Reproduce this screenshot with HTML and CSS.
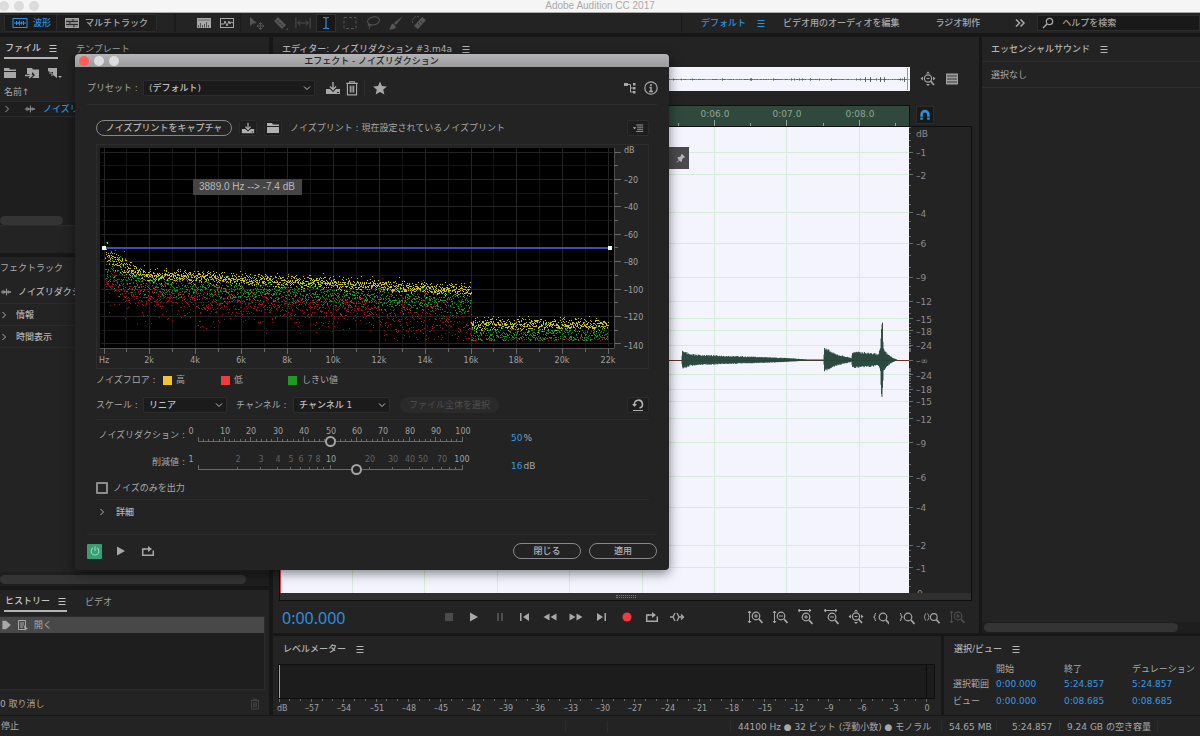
FILE: index.html
```html
<!DOCTYPE html>
<html lang="ja">
<head>
<meta charset="utf-8">
<title>Adobe Audition CC 2017</title>
<link rel="stylesheet" href="styles.css">
</head>
<body>
<svg class="sprite" aria-hidden="true">
  <symbol id="i-wave" viewBox="0 0 16 12"><rect x="1" y="1.500" width="14" height="9" fill="none" stroke="currentColor"/><path d="M2 6h12M4.500 4v4M6 5v2M7.500 3.500v5M9.500 4.500v3M11.500 4v4" stroke="currentColor" fill="none"/></symbol>
  <symbol id="i-multi" viewBox="0 0 16 12"><rect x="1.500" y="1.500" width="13" height="9" fill="#8a8a8a" stroke="currentColor"/><path d="M2 4.500h12M2 7.500h12M9 2v2.500M6 4.500v3M10 7.500v3" stroke="#2a2a2a"/></symbol>
  <symbol id="i-spec" viewBox="0 0 16 12"><rect x="1" y="1" width="14" height="10" fill="currentColor"/><path d="M2 3h12" stroke="#666"/><path d="M2.500 10.500V8M4.500 10.500V6M6.500 10.500V8M8.500 10.500V7M10.500 10.500V5M12.500 10.500V8" stroke="#555"/></symbol>
  <symbol id="i-pitch" viewBox="0 0 16 12"><rect x="1.500" y="1.500" width="13" height="9" fill="none" stroke="currentColor"/><path d="M2 7h3l1-3 2 5 2-5 1 3 1-2 2 1" fill="none" stroke="currentColor"/></symbol>
  <symbol id="i-move" viewBox="0 0 16 16"><path d="M1 2v9l3-2.500 4-.5z" fill="currentColor"/><path d="M8 11h7M11.500 7.500v7M9.500 9.500L8 11l1.500 1.500M13.500 9.500L15 11l-1.500 1.500M10 9l1.500-1.500L13 9M10 13l1.500 1.500L13 13" stroke="currentColor" fill="none"/></symbol>
  <symbol id="i-razor" viewBox="0 0 16 16"><path d="M6 2l8 8-4 4-8-8z" fill="currentColor"/><path d="M5 5.500l6 6" stroke="#232323" stroke-dasharray="2 1"/><path d="M14 15h2v-2z" fill="currentColor"/></symbol>
  <symbol id="i-slip" viewBox="0 0 18 16"><path d="M1 2v12M17 2v12M3 8h12M6 5L3 8l3 3M12 5l3 3-3 3" fill="none" stroke="currentColor"/></symbol>
  <symbol id="i-ibeam" viewBox="0 0 16 16"><path d="M5 2.500h2l1 1 1-1h2M5 13.500h2l1-1 1 1h2M8 3v10" fill="none" stroke="currentColor" stroke-width="1.200"/></symbol>
  <symbol id="i-marquee" viewBox="0 0 16 16"><rect x="2" y="2.500" width="12" height="11" fill="none" stroke="currentColor" stroke-dasharray="3 2"/></symbol>
  <symbol id="i-lasso" viewBox="0 0 16 16"><ellipse cx="8.500" cy="6" rx="6" ry="4" fill="none" stroke="currentColor" transform="rotate(-12 8 6)"/><path d="M4 9c-2 1 0 3 1 2s-1-2-1-1 2 2 0 4" fill="none" stroke="currentColor"/></symbol>
  <symbol id="i-brush" viewBox="0 0 16 16"><path d="M15 1L8 10 6 8z" fill="currentColor"/><path d="M5 8.500l3 3c-1 3-4 3-7 3 2-1 1-5 4-6z" fill="currentColor"/></symbol>
  <symbol id="i-heal" viewBox="0 0 16 16"><path d="M11 2l4 3-8 9-4-3z" fill="currentColor"/><path d="M7 8l3 3M9 6l3 3" stroke="#232323" stroke-dasharray="1 1"/><path d="M8 2C4 0 0 4 2 9" fill="none" stroke="currentColor" stroke-dasharray="2 1"/></symbol>
  <symbol id="i-menu" viewBox="0 0 8 8"><path d="M.5 1.500h7M.5 4.500h7M.5 7.500h7" stroke="currentColor"/></symbol>
  <symbol id="i-more" viewBox="0 0 12 10"><path d="M2 1.500L5.500 5 2 8.500M6.500 1.500L10 5 6.500 8.500" fill="none" stroke="currentColor" stroke-width="1.500"/></symbol>
  <symbol id="i-search" viewBox="0 0 12 12"><circle cx="7.500" cy="4.500" r="3.200" fill="none" stroke="currentColor" stroke-width="1.200"/><path d="M5 7L1 11" stroke="currentColor" stroke-width="1.500"/></symbol>
  <symbol id="i-folder" viewBox="0 0 14 12"><path d="M1 1h5l1 1.500h6V4H1z" fill="currentColor"/><path d="M1 5h12v6H1z" fill="currentColor"/></symbol>
  <symbol id="i-import" viewBox="0 0 16 12"><path d="M3 1h5l1 1.500h6V11H8l3-3-3-3v2H3z" fill="currentColor"/><path d="M1 8.500h6M5 6l3 2.500L5 11" fill="none" stroke="currentColor" stroke-width="1.500"/></symbol>
  <symbol id="i-new" viewBox="0 0 16 12"><path d="M2 1h9v10L7 8V5H4L2 4z" fill="currentColor"/><path d="M3 6h3v3" fill="none" stroke="currentColor"/><path d="M12 9h4l-2 2z" fill="currentColor"/></symbol>
  <symbol id="i-clip" viewBox="0 0 14 10"><path d="M1 5h12M3.500 2.500v5M5.500 3.500v3M7.500 1v8M9.500 3v4M11.500 4v2" stroke="currentColor"/></symbol>
  <symbol id="i-chev" viewBox="0 0 8 8"><path d="M2.500 1l3 3-3 3" fill="none" stroke="currentColor"/></symbol>
  <symbol id="i-down" viewBox="0 0 8 8"><path d="M1 2.500l3 3 3-3" fill="none" stroke="currentColor"/></symbol>
  <symbol id="i-save" viewBox="0 0 16 14"><path d="M1 8h4l3 3 3-3h4v5H1z" fill="currentColor"/><path d="M8 1v7M5 5.500l3 3 3-3" fill="none" stroke="currentColor" stroke-width="1.400"/><path d="M12 11.500h2" stroke="#222"/></symbol>
  <symbol id="i-trash" viewBox="0 0 12 14"><path d="M1 3h10M4 3V1.500h4V3M2 3v10h8V3M4.500 5v6M6 5v6M7.500 5v6" fill="none" stroke="currentColor"/></symbol>
  <symbol id="i-star" viewBox="0 0 14 14"><path d="M7 .5l2 4.500 4.900.5-3.700 3.200 1.200 4.800L7 11l-4.400 2.500 1.200-4.800L.1 5.500 5 5z" fill="currentColor"/></symbol>
  <symbol id="i-route" viewBox="0 0 12 12"><path d="M0 1h4v3H0zM9 1h2.500v2.500H9zM9 5h2.500v2.500H9zM9 9h2.500v2.500H9z" fill="currentColor"/><path d="M4 2.500h2.500V10H9M6.500 6H9" fill="none" stroke="currentColor"/></symbol>
  <symbol id="i-info" viewBox="0 0 14 14"><circle cx="7" cy="7" r="6.200" fill="none" stroke="currentColor" stroke-width="1.200"/><path d="M7 3v2M5.500 6.500H7v4M5 10.500h4" fill="none" stroke="currentColor" stroke-width="1.500"/></symbol>
  <symbol id="i-pmenu" viewBox="0 0 14 10"><path d="M1 4h4L3 6.500z" fill="currentColor"/><path d="M5 1.500h8M6 4h7M6 6.500h7M5 9h8" stroke="currentColor"/></symbol>
  <symbol id="i-reset" viewBox="0 0 14 14"><path d="M3.500 6.500a4 4 0 1 1 5 3.500" fill="none" stroke="currentColor" stroke-width="1.600"/><path d="M1 6h5L3.500 9z" fill="currentColor"/><path d="M2 12.500h10" stroke="currentColor"/></symbol>
  <symbol id="i-power" viewBox="0 0 14 14"><path d="M4.500 3.500a4.500 4.500 0 1 0 5 0M7 1.500V7" fill="none" stroke="currentColor" stroke-width="1.200"/></symbol>
  <symbol id="i-stop" viewBox="0 0 16 12"><path d="M4 2h8v8H4z" fill="currentColor"/></symbol>
  <symbol id="i-play" viewBox="0 0 16 12"><path d="M4 1.500v9l8-4.500z" fill="currentColor"/></symbol>
  <symbol id="i-pause" viewBox="0 0 16 12"><path d="M5 2h2v8H5zM9 2h2v8H9z" fill="currentColor"/></symbol>
  <symbol id="i-prev" viewBox="0 0 16 12"><path d="M3 2h1.500v8H3zM12 2v8L6 6z" fill="currentColor"/></symbol>
  <symbol id="i-rew" viewBox="0 0 16 12"><path d="M7.500 2.500v7L1.500 6zM14.500 2.500v7L8.500 6z" fill="currentColor"/></symbol>
  <symbol id="i-fwd" viewBox="0 0 16 12"><path d="M1.500 2.500v7L7.500 6zM8.500 2.500v7L14.500 6z" fill="currentColor"/></symbol>
  <symbol id="i-next" viewBox="0 0 16 12"><path d="M11.500 2H13v8h-1.500zM4 2v8l6-4z" fill="currentColor"/></symbol>
  <symbol id="i-rec" viewBox="0 0 16 12"><circle cx="8" cy="6" r="4.500" fill="#f03a40"/></symbol>
  <symbol id="i-loop" viewBox="0 0 16 12"><path d="M5 4H2.700v6.300h10.600V5.500" fill="none" stroke="currentColor" stroke-width="1.500"/><path d="M4 3.200h4V1l4 3-4 3V4.800H4z" fill="currentColor"/></symbol>
  <symbol id="i-skip" viewBox="0 0 16 12"><path d="M1 6h3M6 2L4 6l2 4M8 2l2 4-2 4M10 6h4M12 3.500L14.500 6 12 8.500" fill="none" stroke="currentColor" stroke-width="1.300"/></symbol>
  <symbol id="i-lens" viewBox="0 0 16 16"><circle cx="9" cy="7" r="3.800" fill="none" stroke="currentColor" stroke-width="1.200"/><path d="M12 10l3.500 4" stroke="currentColor" stroke-width="1.800"/></symbol>
  <symbol id="i-zin" viewBox="0 0 16 16"><use href="#i-lens"/><path d="M7 7h4M9 5v4" stroke="currentColor"/><path d="M2.500 2v12M1 4l1.500-2L4 4M1 12l1.500 2L4 12" fill="none" stroke="currentColor"/></symbol>
  <symbol id="i-zout" viewBox="0 0 16 16"><use href="#i-lens"/><path d="M7 7h4" stroke="currentColor"/><path d="M2.500 2v12M1 4l1.500-2L4 4M1 12l1.500 2L4 12" fill="none" stroke="currentColor"/></symbol>
  <symbol id="i-tin" viewBox="0 0 16 16"><use href="#i-lens" y="1"/><path d="M7 8h4M9 6v4" stroke="currentColor"/><path d="M1 1.500h13M3 0L1 1.500 3 3M12 0l2 1.500L12 3" fill="none" stroke="currentColor"/></symbol>
  <symbol id="i-tout" viewBox="0 0 16 16"><use href="#i-lens" y="1"/><path d="M7 8h4" stroke="currentColor"/><path d="M1 1.500h13M3 0L1 1.500 3 3M12 0l2 1.500L12 3" fill="none" stroke="currentColor"/></symbol>
  <symbol id="i-full" viewBox="0 0 16 16"><circle cx="8" cy="7.500" r="3.600" fill="none" stroke="currentColor" stroke-width="1.200"/><path d="M10.500 10l3.500 4" stroke="currentColor" stroke-width="1.800"/><path d="M6.500 7.500h3" stroke="currentColor"/><path d="M6 2.500L8 .5l2 2zM6 13l2 2 2-2zM3 5.500l-2.500 2 2.500 2zM13 5.500l2.500 2-2.500 2z" fill="currentColor"/></symbol>
  <symbol id="i-zl" viewBox="0 0 16 16"><use href="#i-lens" x="1" y="1"/><path d="M3 4L2 5v2L.5 8 2 9v2l1 1" fill="none" stroke="currentColor"/></symbol>
  <symbol id="i-zr" viewBox="0 0 16 16"><use href="#i-lens" x="0" y="1"/><path d="M1 4l1 1v2l1.500 1L2 9v2l-1 1" fill="none" stroke="currentColor"/></symbol>
  <symbol id="i-zs" viewBox="0 0 18 16"><use href="#i-lens" x="2" y="1" width="16" height="16"/><path d="M2 4L1 6v1L0 8l1 1v1l1 2M4 4l1 2v1l1 1-1 1v1l-1 2" fill="none" stroke="currentColor"/></symbol>
  <symbol id="i-list" viewBox="0 0 14 12"><path d="M1 .5h12v11H1z" fill="currentColor"/><path d="M2 3h10M2 6h10M2 9h10" stroke="#333"/></symbol>
  <symbol id="i-magnet" viewBox="0 0 14 14"><path d="M3 9V6.500a4 4 0 0 1 8 0V9" fill="none" stroke="currentColor" stroke-width="3"/><path d="M1.500 10h3v2.500h-3zM9.500 10h3v2.500h-3z" fill="currentColor"/></symbol>
  <symbol id="i-pin" viewBox="0 0 12 12"><path d="M7 2l3 3-1 1H8L7 8v1.500l-1 .5-1.500-1.500L2 10.500l-.5-.5L4 8 2.500 6.500 3 5h1.500L6 4V2.500z" fill="currentColor"/></symbol>
  <symbol id="i-doc" viewBox="0 0 12 12"><path d="M1.500 1.500h7v9h-7z" fill="none" stroke="currentColor"/><path d="M3 4h4M3 6h4M3 8h3" stroke="currentColor"/><path d="M7 6l4 4-2 .2L8 12z" fill="currentColor"/></symbol>
  <symbol id="i-head" viewBox="0 0 10 10"><path d="M2 1.500h3L9 5 5 8.500H2z" fill="currentColor"/></symbol>
</svg>

<div class="app">
  <header class="titlebar"><i class="light"></i><i class="light"></i><i class="light"></i><h1>Adobe Audition CC 2017</h1></header>

  <nav class="toolbar">
    <div class="modes">
      <button class="mode active"><svg class="ic wide"><use href="#i-wave"/></svg>波形</button>
      <button class="mode"><svg class="ic wide"><use href="#i-multi"/></svg>マルチトラック</button>
    </div>
    <div class="tools views">
      <button class="tool" aria-label="スペクトル"><svg class="ic"><use href="#i-spec"/></svg></button>
      <button class="tool" aria-label="ピッチ"><svg class="ic"><use href="#i-pitch"/></svg></button>
    </div>
    <div class="tools dimmed">
      <button class="tool" aria-label="移動"><svg class="ic"><use href="#i-move"/></svg></button>
      <button class="tool" aria-label="カット"><svg class="ic"><use href="#i-razor"/></svg></button>
      <button class="tool" aria-label="スリップ"><svg class="ic"><use href="#i-slip"/></svg></button>
      <button class="tool on" aria-label="時間選択"><svg class="ic"><use href="#i-ibeam"/></svg></button>
      <button class="tool" aria-label="長方形選択"><svg class="ic"><use href="#i-marquee"/></svg></button>
      <button class="tool" aria-label="なげなわ"><svg class="ic"><use href="#i-lasso"/></svg></button>
      <button class="tool" aria-label="ブラシ"><svg class="ic"><use href="#i-brush"/></svg></button>
      <button class="tool" aria-label="修復"><svg class="ic"><use href="#i-heal"/></svg></button>
    </div>
    <div class="spaces">
      <button class="space current">デフォルト<svg class="ic tiny"><use href="#i-menu"/></svg></button>
      <button class="space video">ビデオ用のオーディオを編集</button>
      <button class="space radio">ラジオ制作</button>
      <button class="space more" aria-label="その他"><svg class="ic small"><use href="#i-more"/></svg></button>
      <label class="search"><svg class="ic small"><use href="#i-search"/></svg><input type="text" placeholder="ヘルプを検索" aria-label="ヘルプを検索"></label>
    </div>
  </nav>

  <main class="workspace">
    <div class="leftcol">
      <section class="panel files">
        <div class="tabs"><button class="tab active">ファイル<svg class="ic tiny"><use href="#i-menu"/></svg></button><button class="tab">テンプレート</button></div>
        <div class="filetools"><svg class="ic folder"><use href="#i-folder"/></svg><svg class="ic"><use href="#i-import"/></svg><svg class="ic"><use href="#i-new"/></svg></div>
        <div class="colhead">名前↑</div>
        <div class="filelist">
          <div class="filerow"><svg class="ic tiny"><use href="#i-chev"/></svg><svg class="ic small"><use href="#i-clip"/></svg><b>ノイズリダクション #3.m4a</b></div>
          <i class="thumb"></i>
        </div>
      </section>
      <section class="panel rack">
        <div class="racktab">フェクトラック</div>
        <div class="rackrow first"><svg class="ic small"><use href="#i-clip"/></svg>ノイズリダクション</div>
        <div class="rackrow"><svg class="ic tiny"><use href="#i-chev"/></svg>情報</div>
        <div class="rackrow"><svg class="ic tiny"><use href="#i-chev"/></svg>時間表示</div>
        <div class="hscroll"><i class="thumb"></i></div>
      </section>
      <section class="panel history">
        <div class="tabs"><button class="tab active">ヒストリー<svg class="ic tiny"><use href="#i-menu"/></svg></button><button class="tab">ビデオ</button></div>
        <div class="histlist"><div class="histrow"><svg class="ic head"><use href="#i-head"/></svg><svg class="ic small"><use href="#i-doc"/></svg>開く</div></div>
        <div class="undo"><span>0 取り消し</span><svg class="ic small"><use href="#i-trash"/></svg></div>
      </section>
    </div>

    <div class="maincol">
      <div class="upper">
        <section class="panel editor">
          <h2 class="heading">エディター: ノイズリダクション #3.m4a<svg class="ic tiny"><use href="#i-menu"/></svg></h2>
          <div class="overrow">
            <div class="overview"><svg id="overview" class="chart"></svg></div>
            <svg class="ic"><use href="#i-full"/></svg><svg class="ic list"><use href="#i-list"/></svg>
          </div>
          <div class="rulerrow">
            <div class="ruler"><svg id="ruler" class="chart"></svg></div>
            <button class="snap" aria-label="スナップ"><svg class="ic small"><use href="#i-magnet"/></svg></button>
          </div>
          <div class="waverow">
            <div class="wave"><svg id="wave" class="chart"></svg></div>
            <div class="dbscale"><svg id="dbscale" class="chart"></svg></div>
          </div>
          <div class="grip"><i></i></div>
          <div class="transport">
            <output class="clock">0:00.000</output>
            <div class="buttons play">
              <button class="off" aria-label="停止"><svg class="ic"><use href="#i-stop"/></svg></button>
              <button aria-label="再生"><svg class="ic"><use href="#i-play"/></svg></button>
              <button class="off" aria-label="一時停止"><svg class="ic"><use href="#i-pause"/></svg></button>
              <button aria-label="先頭へ"><svg class="ic"><use href="#i-prev"/></svg></button>
              <button aria-label="巻き戻し"><svg class="ic"><use href="#i-rew"/></svg></button>
              <button aria-label="早送り"><svg class="ic"><use href="#i-fwd"/></svg></button>
              <button aria-label="末尾へ"><svg class="ic"><use href="#i-next"/></svg></button>
              <button aria-label="録音"><svg class="ic"><use href="#i-rec"/></svg></button>
              <button aria-label="ループ"><svg class="ic"><use href="#i-loop"/></svg></button>
              <button aria-label="スキップ"><svg class="ic"><use href="#i-skip"/></svg></button>
            </div>
            <div class="buttons zoom">
              <button aria-label="振幅ズームイン"><svg class="ic"><use href="#i-zin"/></svg></button>
              <button aria-label="振幅ズームアウト"><svg class="ic"><use href="#i-zout"/></svg></button>
              <button aria-label="時間ズームイン"><svg class="ic"><use href="#i-tin"/></svg></button>
              <button aria-label="時間ズームアウト"><svg class="ic"><use href="#i-tout"/></svg></button>
              <button aria-label="全体表示"><svg class="ic"><use href="#i-full"/></svg></button>
              <button aria-label="イン点"><svg class="ic"><use href="#i-zl"/></svg></button>
              <button aria-label="アウト点"><svg class="ic"><use href="#i-zr"/></svg></button>
              <button aria-label="選択範囲"><svg class="ic"><use href="#i-zs"/></svg></button>
              <button class="off" aria-label="選択トラック"><svg class="ic"><use href="#i-zin"/></svg></button>
            </div>
          </div>
          <div class="hud"><svg class="ic small"><use href="#i-pin"/></svg></div>
        </section>
        <section class="panel sound">
          <h2 class="heading">エッセンシャルサウンド<svg class="ic tiny"><use href="#i-menu"/></svg></h2>
          <p class="none">選択なし</p>
          <div class="hscroll"><i class="thumb"></i></div>
        </section>
      </div>
      <div class="lower">
        <section class="panel meter">
          <h2 class="heading">レベルメーター<svg class="ic tiny"><use href="#i-menu"/></svg></h2>
          <div class="levels"><i class="peak"></i><i class="clip"></i></div>
          <div class="levelscale"><svg id="levelscale" class="chart"></svg></div>
        </section>
        <section class="panel selview">
          <h2 class="heading">選択/ビュー<svg class="ic tiny"><use href="#i-menu"/></svg></h2>
          <table>
            <thead><tr><th></th><th>開始</th><th>終了</th><th>デュレーション</th></tr></thead>
            <tbody>
              <tr><th>選択範囲</th><td>0:00.000</td><td>5:24.857</td><td>5:24.857</td></tr>
              <tr><th>ビュー</th><td>0:00.000</td><td>0:08.685</td><td>0:08.685</td></tr>
            </tbody>
          </table>
        </section>
      </div>
    </div>
  </main>

  <footer class="status">
    <span class="state">停止</span>
    <span class="cell blank"></span><span class="cell gap"></span>
    <span class="cell format">44100 Hz ● 32 ビット (浮動小数) ● モノラル</span>
    <span class="cell size">54.65 MB</span><span class="cell length">5:24.857</span><span class="cell free">9.24 GB の空き容量</span><span class="cell last"></span>
  </footer>
</div>

<div class="dialog" role="dialog" aria-labelledby="dlg-title">
  <div class="dlg-bar"><i class="light red"></i><i class="light"></i><i class="light"></i><h2 id="dlg-title">エフェクト - ノイズリダクション</h2></div>
  <div class="dlg-body">
    <div class="presetrow">
      <label for="preset">プリセット :</label>
      <span class="pick preset"><select id="preset"><option>(デフォルト)</option></select><svg class="ic tiny"><use href="#i-down"/></svg></span>
      <button class="plain save" aria-label="保存"><svg class="ic"><use href="#i-save"/></svg></button>
      <button class="plain bin" aria-label="削除"><svg class="ic"><use href="#i-trash"/></svg></button>
      <button class="plain star" aria-label="お気に入り"><svg class="ic med"><use href="#i-star"/></svg></button>
      <button class="plain route" aria-label="ルーティング"><svg class="ic small"><use href="#i-route"/></svg></button>
      <button class="plain" aria-label="情報"><svg class="ic med"><use href="#i-info"/></svg></button>
    </div>
    <div class="inner">
      <div class="printrow">
        <button class="pill capture">ノイズプリントをキャプチャ</button>
        <button class="boxed" aria-label="保存"><svg class="ic med"><use href="#i-save"/></svg></button>
        <button class="boxed" aria-label="読み込み"><svg class="ic med"><use href="#i-folder"/></svg></button>
        <span>ノイズプリント : 現在設定されているノイズプリント</span>
        <button class="boxed end" aria-label="メニュー"><svg class="ic small"><use href="#i-pmenu"/></svg></button>
      </div>
      <div class="graph"><svg id="noise" class="chart"></svg><span class="readout">3889.0 Hz --&gt; -7.4 dB</span></div>
      <div class="legend"><span>ノイズフロア :</span><span class="key high">高</span><span class="key low">低</span><span class="key thr">しきい値</span></div>
      <div class="scalerow">
        <label for="scale">スケール :</label>
        <span class="pick scale"><select id="scale"><option>リニア</option></select><svg class="ic tiny"><use href="#i-down"/></svg></span>
        <label for="channel">チャンネル :</label>
        <span class="pick channel"><select id="channel"><option>チャンネル 1</option></select><svg class="ic tiny"><use href="#i-down"/></svg></span>
        <button class="pill disabled" disabled>ファイル全体を選択</button>
        <button class="boxed end" aria-label="リセット"><svg class="ic med"><use href="#i-reset"/></svg></button>
      </div>
      <div class="sliders">
        <div class="slider"><label for="nr">ノイズリダクション :</label><div class="track"><svg id="lin" class="chart"></svg><input id="nr" type="range" min="0" max="100" value="50"></div><output><b>50</b>%</output></div>
        <div class="slider"><label for="by">削減値 :</label><div class="track"><svg id="log" class="chart"></svg><input id="by" type="range" min="0" max="1000" value="602"></div><output><b>16</b>dB</output></div>
      </div>
      <div class="checkrow"><input id="only" type="checkbox"><label for="only">ノイズのみを出力</label></div>
      <div class="advanced"><svg class="ic tiny"><use href="#i-chev"/></svg><b>詳細</b></div>
    </div>
    <div class="dlg-foot">
      <button class="power" aria-label="電源"><svg class="ic small"><use href="#i-power"/></svg></button>
      <button class="plain" aria-label="再生"><svg class="ic"><use href="#i-play"/></svg></button>
      <button class="plain" aria-label="ループ"><svg class="ic"><use href="#i-loop"/></svg></button>
      <button class="pill action first">閉じる</button>
      <button class="pill action">適用</button>
    </div>
  </div>
</div>
<script src="script.js"></script>
</body>
</html>
```

FILE: styles.css
```css
* { box-sizing: border-box; }
body { margin: 0; background: #171717; color: #a8a8a8; font: 9px/12px "DejaVu Sans", "Noto Sans CJK JP", sans-serif; overflow: hidden; }
button, input, select { font: inherit; color: inherit; background: none; border: 0; padding: 0; margin: 0; }
button { display: inline-flex; align-items: center; justify-content: center; white-space: nowrap; }
h1, h2, p { margin: 0; font-size: inherit; font-weight: 500; }
b { font-weight: 500; }
.sprite { position: absolute; width: 0; height: 0; }
.ic { width: 16px; height: 16px; flex: none; display: block; }
.ic.wide { height: 12px; }
.ic.med { width: 14px; height: 14px; }
.ic.small { width: 12px; height: 12px; }
.ic.tiny { width: 8px; height: 8px; }
.chart { display: block; width: 100%; height: 100%; }

.app { height: 100vh; display: flex; flex-direction: column; }
.titlebar { flex: none; height: 13px; display: flex; align-items: center; gap: 5px; padding-right: 44px; background: #f5f5f5; border-bottom: 1px solid #aaa; }
.titlebar h1 { flex: 1; text-align: center; color: #aaa; font: 10px/12px "Liberation Sans", sans-serif; }
.light { width: 10px; height: 10px; border-radius: 50%; background: #dcdcdc; }
.titlebar .light:first-child { margin-left: -1px; }

.toolbar { flex: none; height: 20px; display: flex; align-items: center; background: #232323; }
.modes { display: flex; margin-left: 4px; width: 153px; height: 18px; border: 1px solid #2c2c2c; border-radius: 2px; background: #1e1e1e; }
.mode { padding: 0 7px; gap: 5px; border-right: 1px solid #2c2c2c; font-weight: 500; }
.mode:last-child { border: 0; }
.mode.active { color: #2e8fdd; background: #1a1a1a; padding: 0 5px 0 7px; }
.tools { display: flex; align-items: center; height: 18px; }
.tool { width: 23px; height: 18px; }
.tools.views { margin-left: 17px; padding-left: 16px; border-left: 2px solid #1b1b1b; width: 66px; }
.tools.dimmed { padding-left: 4px; border-left: 1px solid #1b1b1b; color: #555; }
.tool.on { background: #181818; border: 1px solid #303030; color: #2e8fdd; width: 20px; margin: 0 2px; }
.spaces { margin-left: auto; display: flex; align-items: stretch; height: 20px; width: 519px; border-left: 1px solid #1a1a1a; padding-left: 19px; }
.space { font-weight: 500; }
.space.current { gap: 11px; color: #2e8fdd; }
.space.video { margin: 0 36px 0 18px; }
.space.radio { margin: 0 34px 0 0; }
.space.more { margin: 0 7px 0 0; }
.search { flex: 1; display: flex; align-items: center; gap: 8px; height: 16px; margin: 2px 0 2px 4px; padding-left: 4px; background: #191919; border: 1px solid #2d2d2d; min-width: 0; }
.search input { flex: 1; min-width: 0; outline: 0; font-weight: 500; }
.search input::placeholder { color: #a0a0a0; opacity: 1; }

.workspace { flex: 1; min-height: 0; display: grid; grid-template-columns: 269px minmax(0, 1fr); column-gap: 4px; padding-top: 4px; }
.panel { background: #232323; min-width: 0; position: relative; }
.heading, .tab { color: #b4b4b4; }
.heading { display: flex; align-items: center; gap: 10px; height: 24px; padding-left: 9px; }
.leftcol { display: flex; flex-direction: column; gap: 4px; min-height: 0; }
.tabs { display: flex; gap: 18px; padding-left: 4px; height: 24px; }
.tab { height: 22px; gap: 8px; color: #a0a0a0; align-items: center; padding-top: 2px; }
.tab.active { color: #c4c4c4; border-bottom: 2px solid #b4b4b4; padding: 2px 1px 0 1px; font-weight: 500; }
.files { flex: none; height: 216px; }
.filetools { display: flex; align-items: center; gap: 6px; height: 24px; padding-left: 2px; color: #a8a8a8; }
.filetools .ic { height: 12px; }
.colhead { height: 16px; padding: 1px 4px; }
.filelist { height: 125px; background: #1e1e1e; border-bottom: 1px solid #2b2b2b; display: flex; flex-direction: column; justify-content: space-between; }
.filerow { display: flex; align-items: center; height: 16px; gap: 13px; padding-left: 3px; color: #a0a0a0; border: 1px solid #2b2b2b; border-left: 0; white-space: nowrap; overflow: hidden; }
.filerow b { color: #2e8fdd; margin-left: -6px; }
.thumb { display: block; height: 9px; border-radius: 5px; background: #343434; }
.filelist .thumb { width: 63px; }
.rack { flex: 1; min-height: 0; display: flex; flex-direction: column; }
.racktab { height: 24px; padding-top: 5px; }
.rackrow { display: flex; align-items: center; gap: 8px; height: 22px; color: #b0b0b0; font-weight: 500; border-bottom: 1px solid #2b2b2b; }
.rackrow.first { height: 23px; gap: 6px; }
.rack .hscroll { margin-top: auto; padding: 3px 0 2px; background: #1e1e1e; }
.rack .thumb { width: 246px; }
.history { flex: none; height: 125px; }
.history .tabs { height: 26px; }
.histlist { height: 74px; margin-right: 4px; background: #1e1e1e; border: 1px solid #2b2b2b; border-left: 0; }
.histrow { display: flex; align-items: center; height: 16px; gap: 5px; background: #484848; color: #a8a8a8; }
.histrow .head { width: 12px; height: 12px; }
.undo { display: flex; justify-content: space-between; align-items: center; height: 27px; padding-right: 8px; }
.undo .ic { color: #4a4a4a; }

.maincol { display: flex; flex-direction: column; gap: 3px; min-height: 0; min-width: 0; }
.upper { flex: 1; min-height: 0; display: grid; grid-template-columns: minmax(0, 1fr) 218px; gap: 3px; }
.editor { display: flex; flex-direction: column; min-height: 0; }
.overrow { display: flex; align-items: center; gap: 9px; height: 24px; margin: 6px 20px 0 7px; color: #a0a0a0; }
.overview { flex: 1; height: 24px; background: #f4f4ff; min-width: 0; margin-right: 1px; }
.ic.list { height: 12px; width: 14px; }
.rulerrow { display: flex; margin: 14px 45px 0 6px; }
.ruler { flex: 1; height: 21px; background: #2f4a3c; border: 1px solid #101010; border-bottom: 0; min-width: 0; }
.snap { width: 18px; height: 18px; margin: 1px 0 0 6px; background: #191919; border: 1px solid #2c2c2c; color: #2e8fdd; }
.waverow { flex: 1; min-height: 0; display: flex; margin: 0 7px 0 6px; border: 1px solid #0e0e0e; border-bottom: 0; }
.wave { flex: 1; min-width: 0; background: #f4f4ff; }
.dbscale { width: 62px; flex: none; }
.grip { flex: none; display: flex; justify-content: center; align-items: center; height: 8px; margin: 0 7px 0 6px; background: #2e2f2e; border: 1px solid #0e0e0e; border-top: 0; }
.grip i { width: 20px; height: 3px; border-top: 1px dotted #777; border-bottom: 1px dotted #777; }
.transport { flex: none; display: flex; align-items: center; height: 32px; padding: 0 9px; color: #a8a8a8; }
.clock { width: 154px; padding-top: 2px; color: #2e8fdd; font: 16px/20px "Noto Sans", sans-serif; }
.buttons { display: flex; }
.buttons button { flex: 1; }
.buttons .off { color: #4c4c4c; }
.buttons.play { width: 254px; }
.buttons.zoom { width: 228px; margin-left: auto; }
.buttons.play .ic { height: 12px; }
.hud { position: absolute; left: 380px; top: 110px; width: 36px; height: 22px; display: flex; align-items: center; justify-content: flex-end; padding-right: 2px; background: #4a4a4e; color: #b4b4b4; }
.sound { display: flex; flex-direction: column; }
.sound .heading { border-bottom: 1px solid #2c2c2c; height: 25px; }
.none { padding: 7px 9px 6px; border-bottom: 1px solid #2c2c2c; font-weight: 400; }
.sound .hscroll { margin-top: auto; background: #1e1e1e; padding: 1px 22px 1px 2px; }
.lower { flex: none; height: 79px; display: grid; grid-template-columns: minmax(0, 1fr) 256px; gap: 3px; }
.lower .heading { height: 26px; padding-left: 10px; }
.levels { position: relative; height: 35px; margin: 2px 6px 0 5px; background: #1c1c1c; border: 1px solid #0e0e0e; }
.peak { position: absolute; left: 0; top: 0; bottom: 0; width: 1px; background: #b4ae2e; }
.clip { position: absolute; right: 7px; top: 0; bottom: 0; width: 1px; background: #0e0e0e; }
.levelscale { height: 16px; }
.selview table { border-collapse: collapse; margin-left: 9px; width: calc(100% - 9px); table-layout: fixed; }
.selview th, .selview td { padding: 0; text-align: left; font-weight: 400; white-space: nowrap; height: 17px; }
.selview thead th { height: 13px; }
.selview th:first-child { width: 43px; }
.selview th:nth-child(2), .selview th:nth-child(3) { width: 68px; }
.selview td { color: #359ae8; }

.status { flex: none; height: 20px; margin-top: 1px; display: flex; align-items: center; background: #232323; white-space: nowrap; }
.state { padding-left: 1px; }
.cell { height: 11px; line-height: 12px; border-left: 1px solid #2d2d2d; padding-left: 7px; }
.cell.blank { margin-left: auto; width: 42px; }
.cell.gap { width: 123px; }
.cell.format { width: 211px; }
.cell.size { width: 55px; }
.cell.length { width: 63px; padding-left: 15px; }
.cell.free { width: 98px; }
.cell.last { width: 43px; }

.dialog { position: absolute; left: 75px; top: 54px; width: 594px; background: #232323; border-radius: 4px; box-shadow: 0 3px 12px rgba(0, 0, 0, .5); overflow: hidden; }
.dlg-bar { display: flex; align-items: center; gap: 5px; height: 13px; padding: 0 50px 0 4px; background: linear-gradient(#b4b4b6, #9b9b9d); color: #262626; }
.dlg-bar h2 { flex: 1; text-align: center; font-weight: 500; }
.light.red { background: #ff5f57; }
.dlg-body { padding: 0 12px; }
.presetrow { display: flex; align-items: center; height: 38px; padding-top: 5px; border-bottom: 1px solid #2c2c2c; }
.pick { position: relative; display: inline-flex; height: 16px; background: #1b1b1b; border: 1px solid #2c2c2c; border-radius: 2px; color: #c0c0c0; }
.pick select { appearance: none; width: 100%; padding: 0 16px 0 5px; font-weight: 500; outline: 0; }
.pick .ic { position: absolute; right: 3px; top: 3px; pointer-events: none; }
.pick.preset { width: 172px; margin-left: 5px; }
.plain { color: #a8a8a8; }
.plain.save { margin-left: 10px; }
.plain.bin { margin: 0 4px 0 3px; }
.plain.star { border-left: 1px solid #2f2f2f; padding-left: 8px; height: 16px; }
.plain.route { margin: 0 8px 0 auto; }
.presetrow .plain:last-child { margin-right: -1px; }
.inner { padding: 0 8px 0 9px; }
.printrow { display: flex; align-items: center; height: 39px; padding-top: 7px; }
.pill { height: 16px; border: 1px solid #888; border-radius: 8px; color: #b4b4b4; }
.capture { width: 136px; margin-right: 7px; font-weight: 500; }
.boxed { width: 18px; height: 16px; margin-right: 7px; color: #b0b0b0; background: #1e1e1e; border: 1px solid #2c2c2c; border-radius: 2px; }
.boxed.end { width: 22px; margin: 0 0 0 auto; }
.printrow span { margin-left: 1px; }
.graph { position: relative; height: 225px; border: 1px solid #2c2c2c; }
.readout { position: absolute; left: 96px; top: 34px; padding: 2px 7px 2px 6px; background: #454545; color: #b8b8b8; font: 10px/12px "Liberation Sans", sans-serif; }
.legend { display: flex; align-items: center; height: 22px; }
.legend > span:first-child { width: 67px; }
.key { display: flex; align-items: center; gap: 4px; width: 58px; }
.key::before { content: ""; width: 9px; height: 9px; background: #f4c430; }
.key.low { width: 67px; }
.key.low::before { background: #f23a3f; }
.key.thr::before { background: #1f9a22; }
.key.thr { gap: 5px; width: auto; }
.scalerow { display: flex; align-items: center; height: 29px; border-bottom: 1px solid #2c2c2c; }
.scalerow label:first-child { width: 47px; }
.pick.scale { width: 84px; margin-right: 9px; }
.scalerow label:nth-of-type(2) { width: 57px; }
.pick.channel { width: 97px; margin-right: 10px; }
.pill.disabled { width: 99px; border: 0; background: #2a2a2a; color: #505050; }
.sliders { padding-top: 4px; }
.slider { display: flex; height: 28px; align-items: flex-start; }
.slider label { width: 89px; text-align: right; padding-top: 5px; white-space: nowrap; }
.slider + .slider label { padding-top: 4px; }
.track { position: relative; width: 290px; height: 28px; }
.track input { position: absolute; left: 8px; top: 11px; width: 274px; height: 12px; appearance: none; outline: 0; }
.track input::-webkit-slider-thumb { appearance: none; width: 11px; height: 11px; border: 2px solid #a4a4a4; border-radius: 50%; background: #232323; }
.slider output { margin-left: 36px; padding-top: 8px; display: flex; gap: 1px; }
.slider output b { color: #359ae8; }
.checkrow { display: flex; height: 20px; border-bottom: 1px solid #2c2c2c; gap: 5px; align-items: flex-start; }
.checkrow input { appearance: none; width: 12px; height: 12px; margin-top: 2px; border: 2px solid #8c8c8c; border-radius: 1px; }
.checkrow label { padding-top: 2px; }
.advanced { display: flex; align-items: center; gap: 10px; height: 34px; padding: 0 0 10px 2px; color: #b4b4b4; }
.dlg-foot { display: flex; align-items: center; height: 36px; padding-bottom: 3px; border-top: 1px solid #2c2c2c; }
.power { width: 15px; height: 15px; background: #37a070; color: #9cd8bb; border-radius: 1px; }
.dlg-foot .plain { margin-left: 11px; }
.dlg-foot .plain .ic { height: 12px; }
.action { width: 68px; margin-left: 8px; font-weight: 500; }
.action.first { margin-left: auto; }

svg text { font-family: "DejaVu Sans", sans-serif; font-size: 8px; fill: #a0a0a0; }
svg text.time { font-size: 9px; fill: #8fa598; }
svg text.db { font-size: 9px; fill: #8c8c8c; }
svg text.faint { fill: #626262; }
svg .mid { text-anchor: middle; }
.tick { stroke: #6a6a6a; fill: none; }
.axis { stroke: #505050; fill: none; }
.dot { fill: none; stroke-width: 1; }
```

FILE: script.js
```js
var DURATION = 8.685;
var MINUS = '–';
var seed = 7;
function rnd() { seed = (seed * 16807) % 2147483647; return seed / 2147483647; }
function gauss() { return rnd() + rnd() + rnd() + rnd() - 2; }
function half(v) { return Math.floor(v) + 0.5; }
function lerp(points, x) {
  for (var i = 1; i < points.length; i++) {
    if (x <= points[i][0]) {
      var a = points[i - 1], b = points[i];
      return a[1] + (b[1] - a[1]) * (x - a[0]) / (b[0] - a[0]);
    }
  }
  return points[points.length - 1][1];
}
function path(d, cls, extra) { return '<path d="' + d + '" class="' + (cls || '') + '" ' + (extra || '') + '/>'; }
function text(x, y, s, cls) { return '<text x="' + Math.round(x) + '" y="' + Math.round(y) + '" class="' + (cls || '') + '">' + s + '</text>'; }
function draw(id, fn) {
  var el = document.getElementById(id);
  el.innerHTML = fn(el.clientWidth, el.clientHeight);
}

function overview(w) {
  var d = '', x;
  for (x = 0; x < w - 2; x++) {
    var a = rnd() * 0.5;
    if (rnd() > 0.9) a += 0.9;
    d += 'M' + (x + 0.5) + ' ' + (12.5 - a) + 'v' + 2 * a;
  }
  [585, 590, 600, 604, 624].forEach(function (p) { d += 'M' + half(p * w / 630) + ' 10v5'; });
  return path('M0 12.5H' + w, '', 'stroke="#98a39f"') + path(d, '', 'stroke="#3e5049" stroke-width=".8"') + path('M' + (w - 2.5) + ' 1v22', '', 'stroke="#8b9a9a"');
}

function ruler(w, h) {
  var d = '', out = '', s;
  for (s = 0.5; s < DURATION; s += 0.5) {
    var x = half(s / DURATION * w), major = s % 1 === 0;
    d += 'M' + x + ' ' + h + 'v' + (major ? -6 : -3);
    if (major) out += text(x, 11, '0:0' + s + '.0', 'time mid');
  }
  return path(d, '', 'stroke="#8fa598"') + out;
}

var DB = [1, 2, 4, 6, 9, 12, 15, 18, 24];
function amp(db, h) { return h / 2 * Math.pow(10, -db / 20); }

function wave(w, h) {
  var c = h / 2, d = '', s;
  for (s = 1; s < DURATION; s++) d += 'M' + half(s / DURATION * w) + ' 0v' + h;
  DB.forEach(function (db) { d += 'M0 ' + half(c - amp(db, h)) + 'h' + w + 'M0 ' + half(c + amp(db, h)) + 'h' + w; });
  var env = [[401, 0], [402, 9], [405, 8], [410, 6], [420, 5], [450, 4], [480, 3], [505, 2], [520, 1], [527, 0.4], [543, 0.4], [544, 12], [548, 10], [555, 6], [565, 3.5], [571, 2], [572, 8], [580, 8], [590, 7], [598, 6], [600, 12], [601, 41], [602, 36], [603, 12], [606, 7], [611, 3], [617, 0]];
  var bars = '';
  for (var x = 401; x < 617; x += 0.5) {
    var a = lerp(env, x);
    var p = (x + 0.5) * w / 629;
    bars += 'M' + p + ' ' + (c - a * (0.75 + rnd() * 0.3)) + 'V' + (c + a * (0.75 + rnd() * 0.25));
  }
  return path(d, '', 'stroke="#d6ebd8"') + path('M0 ' + half(c) + 'h' + w, '', 'stroke="#6b3028"') +
    path(bars, '', 'stroke="#27453a" stroke-width=".9"') + path('M.5 0v' + h, '', 'stroke="#e0404c"');
}

function dbscale(w, h) {
  var c = h / 2, d = '', out = text(7, 10, 'dB', 'db'), db;
  DB.forEach(function (v) {
    [-1, 1].forEach(function (k) {
      var y = c + k * amp(v, h);
      d += 'M0 ' + half(y) + 'h4';
      out += text(7, y + 4, MINUS + v, 'db');
    });
  });
  for (db = 0; db < 30; db += db < 2 ? 0.25 : db < 6 ? 0.5 : 1) {
    d += 'M0 ' + half(c - amp(db, h)) + 'h2M0 ' + half(c + amp(db, h)) + 'h2';
  }
  d += 'M0 ' + half(c) + 'h4';
  return path(d, 'tick') + out + text(7, c + 4, MINUS + '∞', 'db') + text(8, h + 4, '0', 'db');
}

function levelscale(w) {
  var x0 = 6, x1 = w - 15, d = '', out = text(4, 12, 'dB');
  for (var v = 60; v >= 0; v--) {
    var x = half(x1 - v / 60 * (x1 - x0));
    d += 'M' + x + ' 0v' + (v % 3 ? 2 : 3);
    if (v % 3 === 0 && v < 60) out += text(x, 12, v ? MINUS + v : '0', 'mid');
  }
  return path(d, 'tick') + out;
}

function noise() {
  var X = function (k) { return 7 + k * 22.94; };
  var Y = function (db) { return 7 + db * 1.37; };
  var grid = '', fine = '', ticks = '', out = '', k, v;
  for (k = 0; k <= 22; k++) {
    var x = half(X(k));
    if (k % 2) fine += 'M' + x + ' 3v199'; else grid += 'M' + x + ' 3v199';
    ticks += 'M' + x + ' 203v' + (k % 2 ? 4 : 6);
    if (k % 2 === 0) out += text(x - 1, 218, k ? k + 'k' : 'Hz', 'mid');
  }
  for (v = 0; v <= 140; v += 10) {
    var y = half(Y(v));
    if (v % 20) fine += 'M4 ' + y + 'h512'; else grid += 'M4 ' + y + 'h512';
    ticks += 'M517 ' + y + 'h' + (v % 20 ? 4 : 7);
    if (v % 20 === 0) out += text(527, v === 0 ? 8 : v === 140 ? y + 5 : y + 3, v ? MINUS + v : 'dB');
  }
  var hi = [[8, 108], [12, 110], [18, 116], [30, 124], [50, 131], [100, 132], [160, 136], [230, 138], [300, 142], [374, 146]];
  var th = [[8, 122], [18, 124], [30, 134], [50, 140], [100, 142], [160, 147], [260, 150], [300, 155], [374, 158]];
  var lo = [[8, 140], [18, 138], [30, 146], [50, 149], [100, 155], [160, 157], [260, 161], [300, 168], [374, 182]];
  var Y1 = '', G = '', R = '';
  function dot(px, py) { return py > 196 ? '' : 'M' + Math.round(px) + ' ' + half(py) + 'h1'; }
  for (var p = 8; p < 511; p += 0.25) {
    var early = p < 374, spread = p < 30 ? 9 : 5;
    Y1 += dot(p, (early ? lerp(hi, p) : 180) + gauss() * spread - (rnd() > 0.95 ? 4 : 0));
    G += dot(p, (early ? lerp(th, p) : 191) + gauss() * (p < 30 ? 16 : 10));
    if (early) R += dot(p, lerp(lo, p) + gauss() * (p > 280 ? 26 : 11) + (rnd() > 0.8 ? rnd() * 22 : 0));
    else if (rnd() > 0.82) R += dot(p, 196 - rnd() * 4);
  }
  return '<rect x="3" y="3" width="514" height="200" fill="#000"/>' +
    path(fine, '', 'stroke="#151515"') + path(grid, '', 'stroke="#242424"') + path('M517.5 3v200.500M3 203.500h514', 'axis') + path(ticks, 'tick') + out +
    path(R, 'dot', 'stroke="#a51419"') + path(G, 'dot', 'stroke="#1c9a28"') + path(Y1, 'dot', 'stroke="#cbc42c"') +
    path('M7 103h507', '', 'stroke="#3c4cc0" stroke-width="2"') +
    '<rect x="5" y="101" width="4" height="4" fill="#e8ffff"/><rect x="511" y="101" width="4" height="4" fill="#e8ffff"/>';
}

function lin() {
  var d = 'M13 17.5h265', out = text(6, 10, '0', 'mid');
  for (var i = 0; i <= 50; i++) {
    var x = half(13 + i * 5.28);
    d += 'M' + x + ' 17v' + (i % 5 ? -2 : -4);
    if (i && i % 5 === 0) out += text(x, 10, i * 2, 'mid');
  }
  return path(d, 'tick') + out;
}

function log() {
  var d = 'M13 17.5h265', out = text(6, 10, '1', 'mid');
  for (var dec = 1; dec <= 10; dec *= 10) {
    for (var i = 1; i < 10; i++) {
      var v = dec * i, x = half(13 + Math.log10(v) * 132);
      d += 'M' + x + ' 17v' + (i === 1 ? -4 : -2);
      if (v === 10) out += text(x, 10, v, 'mid');
      else if ((v > 1 && v < 9) || [20, 30, 40, 50, 70].indexOf(v) >= 0) out += text(x, 10, v, 'mid faint');
    }
  }
  return path(d + 'M277.500 17v-4', 'tick') + out + text(277, 10, '100', 'mid');
}

function render() {
  seed = 7;
  draw('overview', overview);
  draw('ruler', ruler);
  draw('wave', wave);
  draw('dbscale', dbscale);
  draw('levelscale', levelscale);
  draw('noise', noise);
  draw('lin', lin);
  draw('log', log);
}
render();
window.addEventListener('resize', render);
```
